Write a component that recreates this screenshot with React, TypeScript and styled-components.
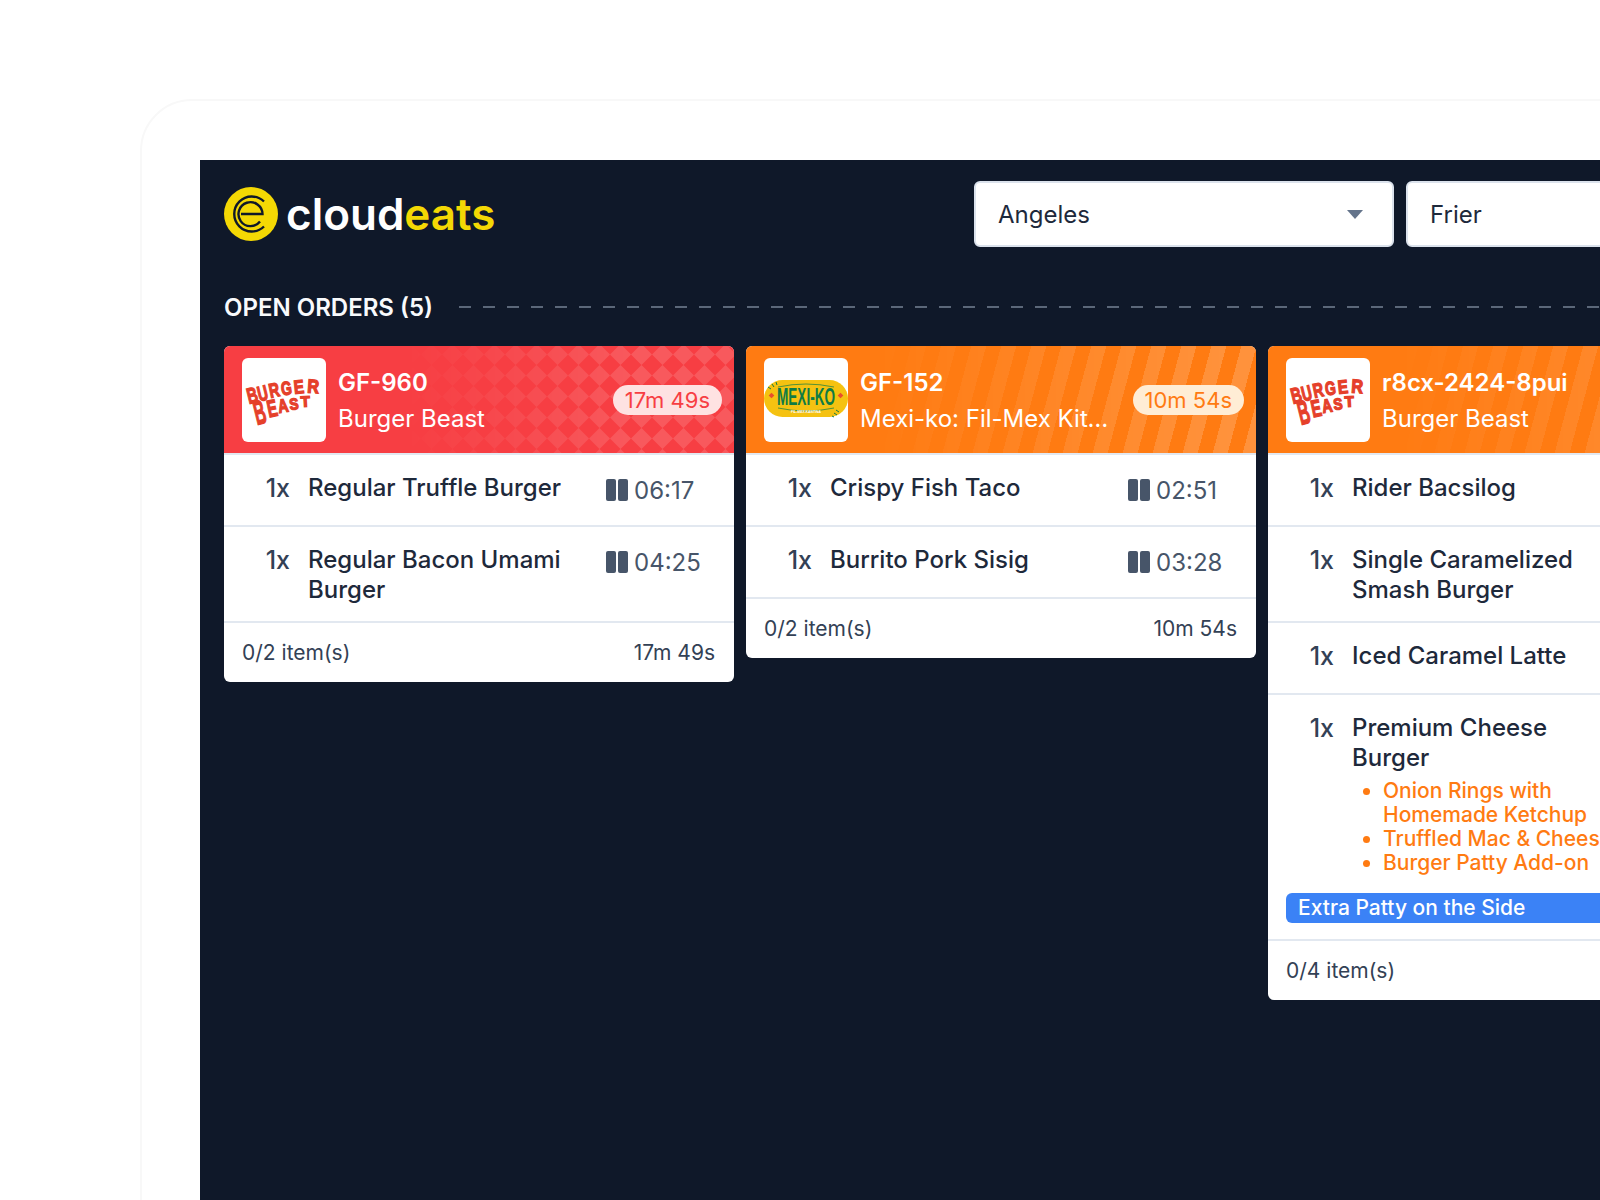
import styled, { createGlobalStyle } from "styled-components";

type Theme = "red" | "orange";
type Brand = "burger" | "mexi";

interface Item {
  name: string;
  time: string;
  addons?: string[];
  note?: string;
}

interface Order {
  id: string;
  store: string;
  brand: Brand;
  theme: Theme;
  elapsed: string;
  items: Item[];
}

const orders: Order[] = [
  {
    id: "GF-960",
    store: "Burger Beast",
    brand: "burger",
    theme: "red",
    elapsed: "17m 49s",
    items: [
      { name: "Regular Truffle Burger", time: "06:17" },
      { name: "Regular Bacon Umami Burger", time: "04:25" },
    ],
  },
  {
    id: "GF-152",
    store: "Mexi-ko: Fil-Mex Kitchen",
    brand: "mexi",
    theme: "orange",
    elapsed: "10m 54s",
    items: [
      { name: "Crispy Fish Taco", time: "02:51" },
      { name: "Burrito Pork Sisig", time: "03:28" },
    ],
  },
  {
    id: "r8cx-2424-8pui",
    store: "Burger Beast",
    brand: "burger",
    theme: "orange",
    elapsed: "9m 12s",
    items: [
      { name: "Rider Bacsilog", time: "05:40" },
      { name: "Single Caramelized Smash Burger", time: "04:10" },
      { name: "Iced Caramel Latte", time: "01:30" },
      {
        name: "Premium Cheese Burger",
        time: "06:02",
        addons: [
          "Onion Rings with Homemade Ketchup",
          "Truffled Mac & Cheese",
          "Burger Patty Add-on",
        ],
        note: "Extra Patty on the Side",
      },
    ],
  },
];

// each letter of the wordmark sits on its own arch position
const burgerLetters = [
  { c: "B", x: 7, y: 46, r: -14, s: 22, w: 0.66 },
  { c: "U", x: 17.5, y: 43.5, r: -14, s: 21, w: 0.66 },
  { c: "R", x: 28.5, y: 40, r: -12, s: 20, w: 0.72 },
  { c: "G", x: 40, y: 37.5, r: -8, s: 19, w: 0.72 },
  { c: "E", x: 52.5, y: 36, r: -6, s: 19, w: 0.8 },
  { c: "R", x: 65, y: 34.5, r: 4, s: 19, w: 0.85 },
  { c: "B", x: 15, y: 67, r: -14, s: 34, w: 0.46 },
  { c: "E", x: 27, y: 59.5, r: -12, s: 24, w: 0.62 },
  { c: "A", x: 37, y: 55, r: -9, s: 19, w: 0.75 },
  { c: "S", x: 48, y: 52, r: -6, s: 16, w: 0.85 },
  { c: "T", x: 59, y: 49, r: -3, s: 15, w: 1 },
];

const BurgerLogo = () => (
  <svg width="84" height="84" viewBox="0 0 84 84">
    {burgerLetters.map((l, i) => (
      <text
        key={i}
        transform={`translate(${l.x} ${l.y}) rotate(${l.r}) scale(${l.w} 1)`}
        fontFamily="'Liberation Sans', sans-serif"
        fontWeight="700"
        fontSize={l.s}
        fill="#e5402a"
        stroke="#e5402a"
        strokeWidth="1.3"
      >
        {l.c}
      </text>
    ))}
  </svg>
);

const MexiLogo = () => (
  <svg width="84" height="84" viewBox="0 0 84 84">
    <rect x="0" y="22" width="84" height="37" rx="18.5" fill="#f5c211" />
    <path d="M14 29 Q42 23 70 29 M14 50 Q42 56 70 50" fill="none" stroke="#0f7b45" strokeWidth="0.7" />
    <path d="M4 29l3 2M8 26l2 3M12 24l1 3M72 52l3 2M70 55l3 2M68 58l2 1" stroke="#0f7b45" strokeWidth="1" />
    <rect x="5.5" y="35.5" width="4" height="4" transform="rotate(45 7.5 37.5)" fill="#e8502c" />
    <rect x="74.5" y="35.5" width="4" height="4" transform="rotate(45 76.5 37.5)" fill="#e8502c" />
    <text
      x="42"
      y="47"
      textAnchor="middle"
      textLength="58"
      lengthAdjust="spacingAndGlyphs"
      fontFamily="'Liberation Sans', sans-serif"
      fontWeight="700"
      fontSize="23"
      fill="#0f7b45"
    >
      MEXI-KO
    </text>
    <text
      x="42"
      y="54.5"
      textAnchor="middle"
      fontFamily="'Liberation Sans', sans-serif"
      fontWeight="700"
      fontSize="3.4"
      fill="#ffffff"
    >
      FIL-MEX KANTINA
    </text>
  </svg>
);

const LogoMark = () => (
  <svg width="54" height="54" viewBox="0 0 54 54">
    <circle cx="27" cy="27" r="27" fill="#f4d804" />
    <path d="M40 14.5A17.5 17.5 0 1 0 40 39.5" fill="none" stroke="#0f1829" strokeWidth="2.4" />
    <path d="M36 34.5A12 12 0 1 1 38.5 27H17" fill="none" stroke="#0f1829" strokeWidth="2.4" />
  </svg>
);

const PauseIcon = () => (
  <svg width="22" height="22" viewBox="0 0 22 22">
    <rect x="0" y="0" width="10" height="22" rx="2" fill="#475569" />
    <rect x="12" y="0" width="10" height="22" rx="2" fill="#475569" />
  </svg>
);

const Diamonds = () => (
  <PatternSvg width="100%" height="100%">
    <defs>
      <pattern id="diamonds" width="21" height="21" patternUnits="userSpaceOnUse" x="8" y="-2">
        <polygon points="10.5,0 21,10.5 10.5,21 0,10.5" fill="#ffffff" fillOpacity="0.14" />
      </pattern>
    </defs>
    <rect width="100%" height="100%" fill="url(#diamonds)" />
  </PatternSvg>
);

const App = (): JSX.Element => {
  return (
    <>
      <GlobalStyle />
      <Frame>
        <Panel>
          <TopBar>
            <Logo>
              <LogoMark />
              <LogoText>
                cloud<LogoAccent>eats</LogoAccent>
              </LogoText>
            </Logo>
            <Filters>
              <Select>
                Angeles
                <Caret />
              </Select>
              <Select>
                Frier
                <Caret />
              </Select>
            </Filters>
          </TopBar>
          <SectionHeader>
            <SectionTitle>OPEN ORDERS (5)</SectionTitle>
            <DashedLine />
          </SectionHeader>
          <Board>
            {orders.map((order) => (
              <Card key={order.id}>
                <CardHeader $theme={order.theme}>
                  {order.theme === "red" ? <Diamonds /> : <Stripes />}
                  <BrandBox>{order.brand === "burger" ? <BurgerLogo /> : <MexiLogo />}</BrandBox>
                  <HeaderText>
                    <OrderId>{order.id}</OrderId>
                    <StoreName>{order.store}</StoreName>
                  </HeaderText>
                  <ElapsedBadge $theme={order.theme}>{order.elapsed}</ElapsedBadge>
                </CardHeader>
                {order.items.map((item) => (
                  <ItemRow key={item.name}>
                    <Qty>1x</Qty>
                    <ItemBody>
                      <ItemName>{item.name}</ItemName>
                      {item.addons && (
                        <Addons>
                          {item.addons.map((addon) => (
                            <li key={addon}>{addon}</li>
                          ))}
                        </Addons>
                      )}
                    </ItemBody>
                    <Timer>
                      <PauseIcon />
                      {item.time}
                    </Timer>
                    {item.note && <Note>{item.note}</Note>}
                  </ItemRow>
                ))}
                <CardFooter>
                  <span>0/{order.items.length} item(s)</span>
                  <span>{order.elapsed}</span>
                </CardFooter>
              </Card>
            ))}
          </Board>
        </Panel>
      </Frame>
    </>
  );
};

const GlobalStyle = createGlobalStyle`
  html, body {
    margin: 0;
    height: 1200px;
    overflow: hidden;
    background: #ffffff;
    font-family: Inter, "Liberation Sans", sans-serif;
  }
`;

const Frame = styled.div`
  box-sizing: border-box;
  width: 1800px;
  height: 1300px;
  margin: 99px 0 0 140px;
  padding: 59px 0 0 58px;
  border: 2px solid #f8f8f8;
  border-radius: 52px 0 0 0;
`;
const Panel = styled.main`
  box-sizing: border-box;
  width: 1650px;
  height: 1100px;
  padding: 21px 0 0 24px;
  background: #0f1829;
`;
const TopBar = styled.header`
  display: flex;
  align-items: center;
  height: 66px;
  padding-right: 24px;
`;
const Logo = styled.div`
  display: flex;
  align-items: center;
  gap: 8px;
`;
const LogoText = styled.span`
  font-size: 44px;
  font-weight: 600;
  line-height: 54px;
  color: #ffffff;
`;
const LogoAccent = styled.span`
  color: #f4d804;
`;
const Filters = styled.div`
  display: flex;
  gap: 12px;
  margin-left: auto;
`;
const Select = styled.div`
  box-sizing: border-box;
  display: flex;
  align-items: center;
  justify-content: space-between;
  width: 420px;
  height: 66px;
  padding: 0 29px 0 22px;
  background: #ffffff;
  border: 2px solid #dbe2ec;
  border-radius: 6px;
  font-size: 24px;
  color: #1e293b;
`;
const Caret = styled.span`
  width: 0;
  height: 0;
  border-left: 8px solid transparent;
  border-right: 8px solid transparent;
  border-top: 9px solid #64748b;
`;
const SectionHeader = styled.div`
  display: flex;
  align-items: center;
  gap: 26px;
  height: 36px;
  margin-top: 42px;
`;
const SectionTitle = styled.h2`
  margin: 0;
  font-size: 24px;
  font-weight: 600;
  color: #f8fafc;
  white-space: nowrap;
`;
const DashedLine = styled.div`
  flex: 1;
  height: 2px;
  background: repeating-linear-gradient(to right, #5b6779 0 12px, transparent 12px 24px);
`;
const Board = styled.div`
  display: flex;
  align-items: flex-start;
  gap: 12px;
  margin-top: 21px;
`;
const Card = styled.article`
  flex: 0 0 510px;
  overflow: hidden;
  background: #ffffff;
  border-radius: 6px;
`;
const CardHeader = styled.div<{ $theme: Theme }>`
  position: relative;
  display: flex;
  align-items: center;
  gap: 12px;
  height: 107px;
  padding: 0 12px 0 18px;
  box-sizing: border-box;
  background: ${(p) => (p.$theme === "red" ? "#f73e43" : "#ff7b12")};
  color: #ffffff;
`;
const PatternSvg = styled.svg`
  position: absolute;
  inset: 0;
  -webkit-mask-image: linear-gradient(to right, transparent 35%, #000 80%);
  mask-image: linear-gradient(to right, transparent 35%, #000 80%);
`;
const Stripes = styled.div`
  position: absolute;
  inset: 0;
  background: repeating-linear-gradient(
    105deg,
    transparent 0 14.5px,
    rgba(255, 255, 255, 0.18) 14.5px 29px
  );
  -webkit-mask-image: linear-gradient(to right, transparent 25%, #000 95%);
  mask-image: linear-gradient(to right, transparent 25%, #000 95%);
`;
const BrandBox = styled.div`
  position: relative;
  flex: 0 0 84px;
  height: 84px;
  overflow: hidden;
  background: #ffffff;
  border-radius: 6px;
`;
const HeaderText = styled.div`
  position: relative;
  flex: 1;
  min-width: 0;
  padding-top: 2px;
`;
const OrderId = styled.div`
  font-size: 24px;
  font-weight: 600;
  line-height: 36px;
  white-space: nowrap;
`;
const StoreName = styled.div`
  overflow: hidden;
  font-size: 24px;
  line-height: 36px;
  text-overflow: ellipsis;
  white-space: nowrap;
`;
const ElapsedBadge = styled.div<{ $theme: Theme }>`
  position: relative;
  flex: none;
  margin-top: 1px;
  padding: 0 12px;
  border-radius: 15px;
  font-size: 22px;
  line-height: 30px;
  background: ${(p) => (p.$theme === "red" ? "#fee2e2" : "#ffedd5")};
  color: ${(p) => (p.$theme === "red" ? "#f73e43" : "#ff7b12")};
`;
const ItemRow = styled.div`
  display: grid;
  grid-template-columns: 48px 270px 110px;
  column-gap: 18px;
  padding: 18px 18px 16px;
  border-top: 2px solid #e2e8f0;
`;
const Qty = styled.div`
  font-size: 25px;
  font-weight: 500;
  line-height: 30px;
  text-align: right;
  color: #334155;
`;
const ItemBody = styled.div`
  min-width: 0;
`;
const ItemName = styled.div`
  font-size: 24px;
  font-weight: 500;
  line-height: 30px;
  color: #1e293b;
`;
const Addons = styled.ul`
  margin: 6px 0 0;
  padding: 0 0 0 31px;
  font-size: 21px;
  font-weight: 500;
  line-height: 24px;
  color: #ff7b12;
  white-space: nowrap;

  li:first-child {
    white-space: normal;
  }
`;
const Timer = styled.div`
  box-sizing: border-box;
  display: flex;
  align-items: center;
  gap: 6px;
  height: 36px;
  margin-left: 10px;
  padding-bottom: 2px;
  font-size: 24px;
  color: #475569;
`;
const Note = styled.div`
  grid-column: 1 / -1;
  margin-top: 18px;
  padding: 0 12px;
  border-radius: 6px;
  background: #3b82f6;
  color: #ffffff;
  font-size: 21px;
  font-weight: 500;
  line-height: 30px;
`;
const CardFooter = styled.footer`
  display: flex;
  align-items: center;
  justify-content: space-between;
  height: 59px;
  padding: 0 19px 0 18px;
  border-top: 2px solid #e2e8f0;
  font-size: 21px;
  color: #334155;
`;

export default App;
